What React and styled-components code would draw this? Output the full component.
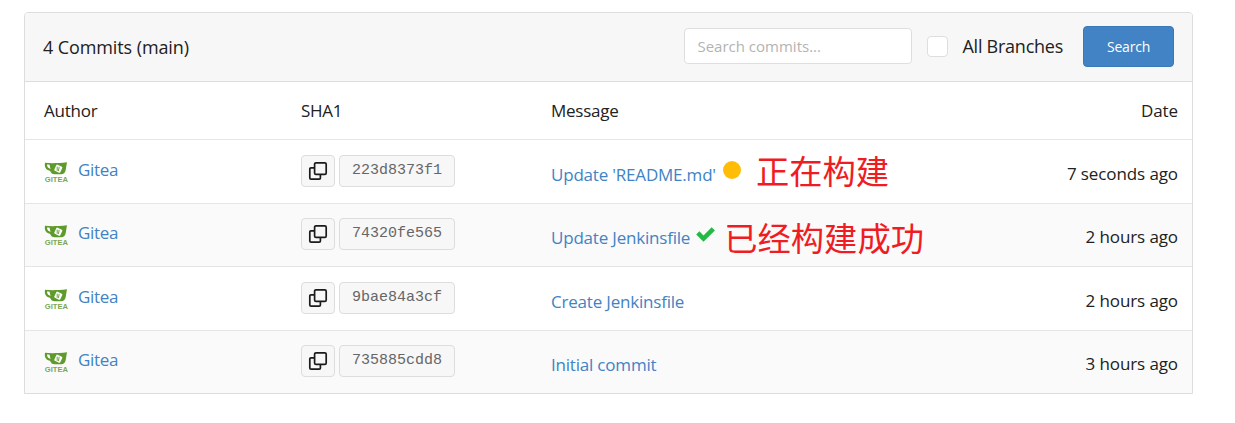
import React from "react"
import styled, { createGlobalStyle } from "styled-components"

const commits = [
    { sha: "223d8373f1", message: "Update 'README.md'", date: "7 seconds ago", status: "pending", note: "正在构建" },
    { sha: "74320fe565", message: "Update Jenkinsfile", date: "2 hours ago", status: "success", note: "已经构建成功" },
    { sha: "9bae84a3cf", message: "Create Jenkinsfile", date: "2 hours ago" },
    { sha: "735885cdd8", message: "Initial commit", date: "3 hours ago" },
]

function GiteaLogo() {
    return (
        <LogoBox>
            <svg width="24" height="24" viewBox="0 0 24 24">
                <path d="M1 2.8C6 3.3 14 3.3 23 2.3l-1.3 7.7c-.6 3-2.2 4.3-4.5 4.3H10.5c-2.2 0-3.5-1-4.5-3.5C3 10.5 0 8 1 2.8z" fill="#5F9A2C" />
                <path d="M3 4.6c1 0 1.9.1 2.6.2.2 1.5.6 3 1 4.2C4.6 8.4 2.8 7 3 4.6z" fill="#fff" />
                <rect x="11" y="5.4" width="6.6" height="6.6" rx="1" transform="rotate(25 14.3 8.7)" fill="#fff" />
                <path d="M13.2 6.6v4.2M15.2 6.8l-.8 4.2" stroke="#5F9A2C" strokeWidth=".9" />
                <text x="12.4" y="22.4" textAnchor="middle" fontFamily="'Liberation Sans', sans-serif" fontSize="7.6" fontWeight="700" fill="#7AA858">GITEA</text>
            </svg>
        </LogoBox>
    )
}

function CopyIcon() {
    return (
        <svg width="20" height="20" viewBox="0 0 20 20" fill="none" stroke="#1B1B1B" strokeWidth="1.7">
            <path d="M6 6.8H3c-.8 0-1.2.4-1.2 1.2v9c0 .8.4 1.2 1.2 1.2h8.2c.8 0 1.2-.4 1.2-1.2v-3" />
            <rect x="6.6" y="1.8" width="11.6" height="11.6" rx="1.4" />
        </svg>
    )
}

function CheckIcon() {
    return (
        <svg width="19" height="15" viewBox="1 0.7 17 13.4">
            <path d="M1.2 7.4l2.8-2.8 3.7 3.7L15 .9l2.9 2.9-10.2 10z" fill="#21BA45" />
        </svg>
    )
}

export default function App() {
    return (
        <>
            <GlobalStyle />
            <Panel>
                <PanelHeader>
                    <Title>4 Commits (main)</Title>
                    <SearchForm>
                        <SearchInput placeholder="Search commits..." readOnly />
                        <CheckBox />
                        <CheckLabel>All Branches</CheckLabel>
                        <SearchButton>Search</SearchButton>
                    </SearchForm>
                </PanelHeader>
                <HeadRow>
                    <span>Author</span>
                    <span>SHA1</span>
                    <span>Message</span>
                    <DateCell>Date</DateCell>
                </HeadRow>
                {commits.map((commit, i) => (
                    <Row key={commit.sha} $striped={i % 2 === 1}>
                        <AuthorCell>
                            <GiteaLogo />
                            <AuthorLink>Gitea</AuthorLink>
                        </AuthorCell>
                        <ShaCell>
                            <CopyButton><CopyIcon /></CopyButton>
                            <ShaLabel>{commit.sha}</ShaLabel>
                        </ShaCell>
                        <MessageCell>
                            <MessageLink>{commit.message}</MessageLink>
                            {commit.status === "pending" && <PendingDot />}
                            {commit.status === "success" && <CheckWrap><CheckIcon /></CheckWrap>}
                            {commit.note && <Note $status={commit.status}>{commit.note}</Note>}
                        </MessageCell>
                        <DateCell $down>{commit.date}</DateCell>
                    </Row>
                ))}
            </Panel>
        </>
    )
}

const GlobalStyle = createGlobalStyle`
    html, body{
        margin: 0;
        padding: 0;
        background: #FFFFFF;
    }
    body{
        font-family: "Open Sans", "Noto Sans", sans-serif;
        color: #212121;
    }
`

const Panel = styled.div`
    box-sizing: border-box;
    width: 1169px;
    margin: 12px 0 0 24px;
    border: 1px solid #DDDDDD;
    border-radius: 4px 4px 0 0;
    overflow: hidden;
`

const PanelHeader = styled.div`
    height: 68px;
    display: flex;
    justify-content: space-between;
    align-items: center;
    padding: 0 18px;
    background: #F7F7F7;
    border-bottom: 1px solid #DDDDDD;
`

const Title = styled.div`
    font-size: 18px;
    letter-spacing: -0.1px;
    color: #212121;
`

const SearchForm = styled.div`
    display: flex;
    align-items: center;
    margin-top: -2px;
`

const SearchInput = styled.input`
    box-sizing: border-box;
    width: 228px;
    height: 36px;
    padding: 0 12px;
    border: 1px solid #DEDEDE;
    border-radius: 4px;
    background: #FFFFFF;
    font-family: inherit;
    font-size: 15px;
    outline: none;
    &::placeholder{
        color: #B3B3B3;
    }
`

const CheckBox = styled.span`
    box-sizing: border-box;
    width: 21px;
    height: 21px;
    margin-left: 15px;
    border: 1px solid #DEDEDE;
    border-radius: 4px;
    background: #FFFFFF;
`

const CheckLabel = styled.span`
    margin-left: 14px;
    font-size: 18px;
    letter-spacing: -0.25px;
    color: #212121;
`

const SearchButton = styled.button`
    width: 91px;
    height: 41px;
    margin-left: 20px;
    border: 1px solid #3A78B8;
    border-radius: 4px;
    background: #4183C4;
    color: #FFFFFF;
    font-family: inherit;
    font-size: 14px;
    letter-spacing: -0.2px;
`

const HeadRow = styled.div`
    height: 57px;
    display: grid;
    grid-template-columns: 257px 250px 1fr auto;
    align-items: center;
    padding: 0 14px 0 19px;
    border-bottom: 1px solid #E5E5E5;
    font-size: 17px;
    letter-spacing: -0.25px;
    color: #212121;
`

const Row = styled.div`
    height: ${(props) => props.$striped ? "61px" : "63px"};
    padding: ${(props) => props.$striped ? "0 14px 1px 19px" : "0 14px 0 19px"};
    display: grid;
    grid-template-columns: 257px 250px 1fr auto;
    align-items: center;
    background: ${(props) => props.$striped ? "#FAFAFA" : "#FFFFFF"};
    border-bottom: 1px solid #E5E5E5;
    &:last-child{
        border-bottom: none;
    }
`

const AuthorCell = styled.div`
    display: flex;
    align-items: center;
    margin-top: -4px;
`

const LogoBox = styled.span`
    width: 24px;
    height: 24px;
    display: block;
    margin-top: 5px;
`

const AuthorLink = styled.span`
    margin-left: 10px;
    font-size: 17px;
    letter-spacing: -0.3px;
    color: #4183C4;
`

const ShaCell = styled.div`
    display: flex;
    align-items: center;
    margin-top: -2px;
`

const CopyButton = styled.span`
    box-sizing: border-box;
    width: 34px;
    height: 32px;
    display: flex;
    align-items: center;
    justify-content: center;
    border: 1px solid #DDDDDD;
    border-radius: 4px;
    background: #F7F7F7;
`

const ShaLabel = styled.span`
    box-sizing: border-box;
    width: 116px;
    height: 32px;
    margin-left: 4px;
    display: flex;
    align-items: center;
    justify-content: center;
    border: 1px solid #DDDDDD;
    border-radius: 4px;
    background: #F7F7F7;
    font-family: "Liberation Mono", "DejaVu Sans Mono", monospace;
    font-size: 15px;
    color: #666666;
`

const MessageCell = styled.div`
    display: flex;
    align-items: center;
    height: 100%;
`

const MessageLink = styled.span`
    font-size: 17px;
    letter-spacing: -0.2px;
    color: #4183C4;
    margin-top: 6px;
`

const PendingDot = styled.span`
    width: 18px;
    height: 18px;
    margin-left: 7px;
    margin-top: -4px;
    border-radius: 50%;
    background: #FFBD07;
`

const CheckWrap = styled.span`
    display: block;
    height: 15px;
    margin-left: 6px;
    margin-top: -5px;
`

const Note = styled.span`
    margin-left: ${(props) => props.$status === "pending" ? "15px" : "9px"};
    margin-top: ${(props) => props.$status === "pending" ? "-3px" : "5px"};
    font-family: "Noto Sans CJK SC", sans-serif;
    font-size: 33.3px;
    line-height: 40px;
    color: #F01C23;
`

const DateCell = styled.span`
    text-align: right;
    ${(props) => props.$down ? "margin-top: 3px;" : ""}
    font-size: 17px;
    letter-spacing: -0.1px;
    color: #212121;
`
